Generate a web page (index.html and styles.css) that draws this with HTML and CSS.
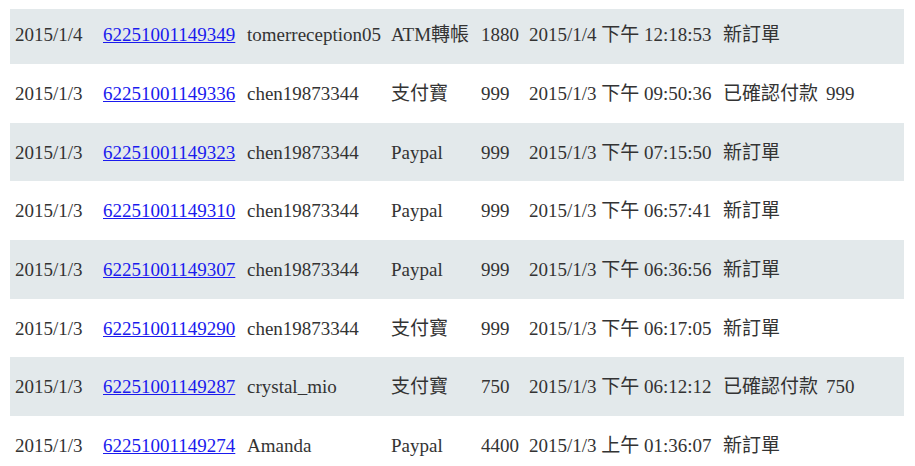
FILE: index.html
```html
<!DOCTYPE html>
<html lang="zh-Hant">
<head>
  <meta charset="UTF-8">
  <title>訂單列表</title>
  <link rel="stylesheet" href="styles.css">
</head>
<body>
  <table class="orders">
    <colgroup>
      <col class="c-date">
      <col class="c-no">
      <col class="c-user">
      <col class="c-pay">
      <col class="c-total">
      <col class="c-time">
      <col class="c-status">
    </colgroup>
    <tbody>
      <tr class="first">
        <td>2015/1/4</td>
        <td><a href="#">62251001149349</a></td>
        <td>tomerreception05</td>
        <td>ATM轉帳</td>
        <td>1880</td>
        <td>2015/1/4 下午 12:18:53</td>
        <td>新訂單</td>
      </tr>
      <tr>
        <td>2015/1/3</td>
        <td><a href="#">62251001149336</a></td>
        <td>chen19873344</td>
        <td>支付寶</td>
        <td>999</td>
        <td>2015/1/3 下午 09:50:36</td>
        <td>已確認付款<span class="paid">999</span></td>
      </tr>
      <tr>
        <td>2015/1/3</td>
        <td><a href="#">62251001149323</a></td>
        <td>chen19873344</td>
        <td>Paypal</td>
        <td>999</td>
        <td>2015/1/3 下午 07:15:50</td>
        <td>新訂單</td>
      </tr>
      <tr>
        <td>2015/1/3</td>
        <td><a href="#">62251001149310</a></td>
        <td>chen19873344</td>
        <td>Paypal</td>
        <td>999</td>
        <td>2015/1/3 下午 06:57:41</td>
        <td>新訂單</td>
      </tr>
      <tr>
        <td>2015/1/3</td>
        <td><a href="#">62251001149307</a></td>
        <td>chen19873344</td>
        <td>Paypal</td>
        <td>999</td>
        <td>2015/1/3 下午 06:36:56</td>
        <td>新訂單</td>
      </tr>
      <tr>
        <td>2015/1/3</td>
        <td><a href="#">62251001149290</a></td>
        <td>chen19873344</td>
        <td>支付寶</td>
        <td>999</td>
        <td>2015/1/3 下午 06:17:05</td>
        <td>新訂單</td>
      </tr>
      <tr>
        <td>2015/1/3</td>
        <td><a href="#">62251001149287</a></td>
        <td>crystal_mio</td>
        <td>支付寶</td>
        <td>750</td>
        <td>2015/1/3 下午 06:12:12</td>
        <td>已確認付款<span class="paid">750</span></td>
      </tr>
      <tr>
        <td>2015/1/3</td>
        <td><a href="#">62251001149274</a></td>
        <td>Amanda</td>
        <td>Paypal</td>
        <td>4400</td>
        <td>2015/1/3 上午 01:36:07</td>
        <td>新訂單</td>
      </tr>
    </tbody>
  </table>
</body>
</html>
```
FILE: styles.css
```css
body {
  margin: 0;
  padding: 9px 0 0 10px;
  background: #fff;
  font-family: "Liberation Serif", "Noto Sans CJK TC", serif;
  font-size: 19px;
  color: #333;
  overflow: hidden;
}

.orders {
  width: 894px;
  table-layout: fixed;
  border-collapse: collapse;
}

.c-date { width: 88px; }
.c-no { width: 144px; }
.c-user { width: 144px; }
.c-pay { width: 90px; }
.c-total { width: 48px; }
.c-time { width: 194px; }

.orders td {
  height: 58.6px;
  padding: 14px 5px 0;
  vertical-align: baseline;
  white-space: nowrap;
  box-sizing: border-box;
}

.orders tr.first td {
  height: 55.3px;
  padding-top: 10px;
}

.orders tr:nth-child(odd) td {
  background-color: #e3e9eb;
}

.orders a {
  color: #1a1aee;
  text-decoration: underline;
}

.paid {
  margin-left: 8px;
}
```
